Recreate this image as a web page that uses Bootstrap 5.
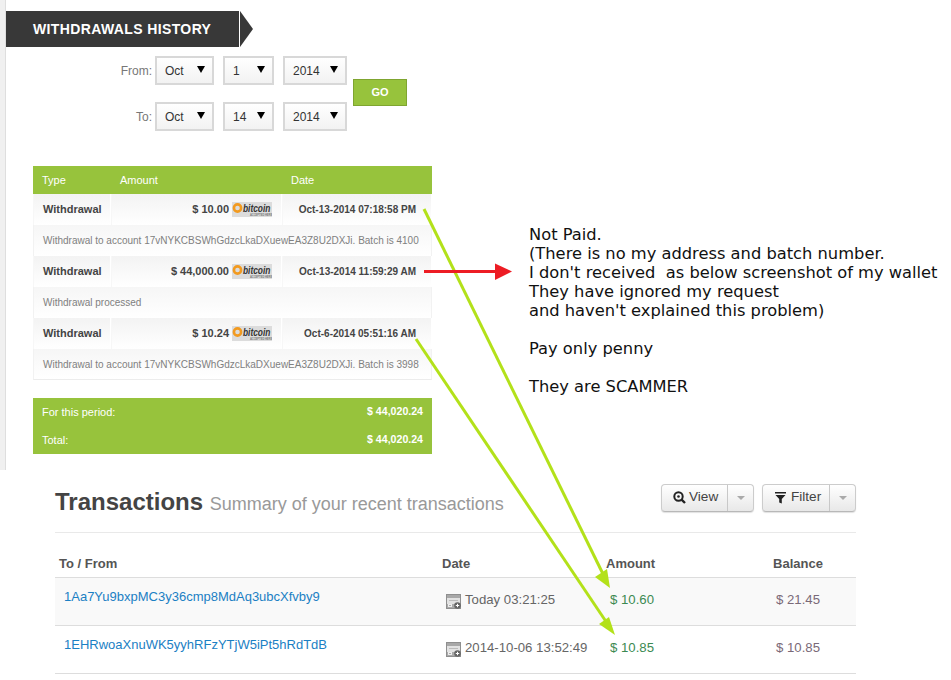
<!DOCTYPE html>
<html lang="en">
<head>
<meta charset="utf-8">
<title>Withdrawals history</title>
<link rel="stylesheet" href="https://cdn.jsdelivr.net/npm/bootstrap@5.3.0/dist/css/bootstrap.min.css">
<style>
html,body{margin:0;background:#fff}
body{width:951px;height:680px;overflow:hidden;position:relative;font-family:"Liberation Sans",Arial,sans-serif;color:#444}
.upper{height:470px;border-left:5px solid #f0f0f0;box-shadow:inset 1px 0 0 #dedede}
.left-col{width:428px;flex:none;padding-top:11px}
.ribbon{width:248px;height:36px;margin-left:1px;gap:1px}
.ribbon-band{width:233px;height:36px;background:#383838;color:#fff;font-size:14px;font-weight:700;letter-spacing:.38px;line-height:36px;padding-left:27px;white-space:nowrap}
.ribbon-tip{width:0;height:0;border-left:13px solid #383838;border-top:18px solid transparent;border-bottom:18px solid transparent}
.filter-wrap{padding-top:9px;height:119px}
.filter-rows{width:348px;gap:17px}
.filter-row{height:29px}
.filter-label{width:150px;flex:none;text-align:right;padding-right:3px;font-size:12px;color:#777}
.pick{appearance:none;height:29px;border:2px solid #d8d8d8;border-radius:0;font-size:12px;color:#333;padding:0 0 0 8px;margin-right:9px;
 background:url("data:image/svg+xml,%3Csvg xmlns='http://www.w3.org/2000/svg' width='8' height='7'%3E%3Cpath d='M0 0h8L4 7z'/%3E%3C/svg%3E") no-repeat right 7px top 8px,linear-gradient(#fff,#f2f2f2)}
.pick-m{width:59px}.pick-d{width:51px}.pick-y{width:64px;margin-right:6px}
.go-btn{width:54px;height:27px;margin-top:23px;background:#97c33c;border:1px solid #7fa530;border-radius:0;color:#fff;font-size:11px;font-weight:700;padding:0;line-height:25px}
.go-btn:hover{background:#97c33c;border-color:#7fa530;color:#fff}
.hist-wrap{margin-left:28px;width:399px}
.hist{width:399px;margin:0;border-collapse:separate;border-spacing:0;table-layout:fixed;font-size:11px;color:#444}
.hist th{background:#97c33c;color:#fff;font-weight:400;height:28px;padding:0 0 0 9px;border:0;font-size:11px;vertical-align:middle;box-shadow:none}
.hist td{padding:0;border:0;vertical-align:middle;box-shadow:none;background:linear-gradient(#f3f3f3,#fff)}
.hist .main-row td{height:31px;font-weight:700;border-left:1px solid #f7f7f7;border-right:1px solid #fff}
.hist .note-row td{height:31px;color:#808080;padding-left:9px;border-left:1px solid #f2f2f2;border-right:1px solid #f2f2f2;font-size:10px;white-space:nowrap;overflow:hidden;background:linear-gradient(#f6f6f6,#fff)}
.hist .note-row:last-child td{border-bottom:1px solid #ececec;height:31px}
.hist .c-type{padding-left:9px;font-size:11px}
.hist .c-amt{font-size:11px}
.hist .c-date{font-size:10px;text-align:right;padding-right:15px;white-space:nowrap}
.amt-line{padding-right:9px;gap:3px}
.coin-tag{width:40px;height:15px;display:block;flex:none}
.sum{width:399px;margin-top:18px;background:#97c33c;color:#fff;font-size:11px;height:56px}
.sum-row{height:28px;padding:0 9px}
.sum-row b{font-size:10.6px}
.note{width:430px;margin-left:96px;padding-top:225px;font-family:"DejaVu Sans",sans-serif;font-size:16.3px;line-height:19px;color:#111;white-space:pre}
.lower{width:801px;margin-left:55px;padding-top:14px}
.head-line{border-bottom:1px solid #e9e9e9;height:49px}
.tx-title{font-size:24px;font-weight:700;color:#444;margin:0;line-height:36px}
.tx-title span{font-size:18px;font-weight:400;color:#999}
.tool-group{height:28px;border:1px solid #ccc;border-bottom-color:#b8b8b8;border-radius:4px;background:linear-gradient(#fff,#e8e8e8);box-shadow:0 1px 1px rgba(0,0,0,.12);font-size:13.6px;color:#444;margin-bottom:20px}
.tool-main{height:26px;gap:3px;padding:0 0 1px 11px;border-right:1px solid #c8c8c8}
.tool-caret{width:25px;height:26px;flex:none}
.tool-caret i{display:block;width:0;height:0;border-top:4px solid #aaa;border-left:4px solid transparent;border-right:4px solid transparent}
.tool-one{width:93px}.tool-two{width:94px;margin-left:8px}
.tool-two .tool-main{gap:5px;padding-left:12px}
.tx{width:801px;margin:0;table-layout:fixed;border-collapse:collapse;font-size:13.2px;color:#666}
.tx th{height:44px;padding:0 0 3px;font-weight:700;color:#555;border:0;border-bottom:1px solid #ddd;vertical-align:bottom;font-size:13px;box-shadow:none;background:none}
.tx td{height:48px;padding:0 0 2px;border:0;border-bottom:1px solid #ddd;background:none;box-shadow:none;vertical-align:middle;color:#666}
.tx tbody tr:first-child td{background:#f9f9f9}
.tx .c-a-h{padding-left:4px}
.tx td.c-a{padding:9px 0 0 9px;vertical-align:top;font-size:13px}
.tx .c-a a{color:#1b80c4;text-decoration:none}
.tx .c-b svg{margin:0 4px;vertical-align:-5px}
.tx .c-c-h{padding-left:8px}
.tx td.c-c{color:#3c8a52;padding-left:12px}
.tx .c-d-h,.tx .c-d{text-align:center}
.tx td.c-d{color:#7a6a78}
.overlay{position:absolute;left:0;top:0;pointer-events:none}
</style>
</head>
<body>
<section class="upper d-flex">
  <div class="left-col">
    <div class="ribbon d-flex">
      <div class="ribbon-band">WITHDRAWALS HISTORY</div>
      <div class="ribbon-tip"></div>
    </div>
    <form class="filter-wrap d-flex">
      <div class="filter-rows d-flex flex-column">
        <div class="filter-row d-flex align-items-center">
          <label class="filter-label">From:</label>
          <select class="pick pick-m"><option>Oct</option></select>
          <select class="pick pick-d"><option>1</option></select>
          <select class="pick pick-y"><option>2014</option></select>
        </div>
        <div class="filter-row d-flex align-items-center">
          <label class="filter-label">To:</label>
          <select class="pick pick-m"><option>Oct</option></select>
          <select class="pick pick-d"><option>14</option></select>
          <select class="pick pick-y"><option>2014</option></select>
        </div>
      </div>
      <button type="button" class="btn go-btn">GO</button>
    </form>
    <div class="hist-wrap">
      <table class="table hist">
        <colgroup><col style="width:78px"><col style="width:171px"><col style="width:150px"></colgroup>
        <thead><tr><th>Type</th><th>Amount</th><th>Date</th></tr></thead>
        <tbody>
          <tr class="main-row"><td class="c-type">Withdrawal</td><td class="c-amt"><div class="d-flex justify-content-end align-items-center amt-line">$ 10.00 <svg class="coin-tag" viewBox="0 0 40 15"><rect width="40" height="15" fill="#dcdcdc"/><circle cx="5.5" cy="6" r="3.6" fill="none" stroke="#f29a1f" stroke-width="2.6"/><text transform="translate(11 10) scale(.76 1)" font-family="Liberation Sans" font-size="11" font-weight="700" font-style="italic" fill="#333">bitcoin</text><text x="18" y="14" font-family="Liberation Sans" font-size="2.6" fill="#777">ACCEPTED HERE</text></svg></div></td><td class="c-date">Oct-13-2014 07:18:58 PM</td></tr>
          <tr class="note-row"><td colspan="3">Withdrawal to account 17vNYKCBSWhGdzcLkaDXuewEA3Z8U2DXJi. Batch is 4100</td></tr>
          <tr class="main-row"><td class="c-type">Withdrawal</td><td class="c-amt"><div class="d-flex justify-content-end align-items-center amt-line">$ 44,000.00 <svg class="coin-tag" viewBox="0 0 40 15"><rect width="40" height="15" fill="#dcdcdc"/><circle cx="5.5" cy="6" r="3.6" fill="none" stroke="#f29a1f" stroke-width="2.6"/><text transform="translate(11 10) scale(.76 1)" font-family="Liberation Sans" font-size="11" font-weight="700" font-style="italic" fill="#333">bitcoin</text><text x="18" y="14" font-family="Liberation Sans" font-size="2.6" fill="#777">ACCEPTED HERE</text></svg></div></td><td class="c-date">Oct-13-2014 11:59:29 AM</td></tr>
          <tr class="note-row"><td colspan="3">Withdrawal processed</td></tr>
          <tr class="main-row"><td class="c-type">Withdrawal</td><td class="c-amt"><div class="d-flex justify-content-end align-items-center amt-line">$ 10.24 <svg class="coin-tag" viewBox="0 0 40 15"><rect width="40" height="15" fill="#dcdcdc"/><circle cx="5.5" cy="6" r="3.6" fill="none" stroke="#f29a1f" stroke-width="2.6"/><text transform="translate(11 10) scale(.76 1)" font-family="Liberation Sans" font-size="11" font-weight="700" font-style="italic" fill="#333">bitcoin</text><text x="18" y="14" font-family="Liberation Sans" font-size="2.6" fill="#777">ACCEPTED HERE</text></svg></div></td><td class="c-date">Oct-6-2014 05:51:16 AM</td></tr>
          <tr class="note-row"><td colspan="3">Withdrawal to account 17vNYKCBSWhGdzcLkaDXuewEA3Z8U2DXJi. Batch is 3998</td></tr>
        </tbody>
      </table>
      <div class="sum">
        <div class="sum-row d-flex justify-content-between align-items-center"><span>For this period:</span><b>$ 44,020.24</b></div>
        <div class="sum-row d-flex justify-content-between align-items-center"><span>Total:</span><b>$ 44,020.24</b></div>
      </div>
    </div>
  </div>
  <div class="note">Not Paid.
(There is no my address and batch number.
I don't received  as below screenshot of my wallet
They have ignored my request
and haven't explained this problem)

Pay only penny

They are SCAMMER</div>
</section>
<section class="lower">
  <div class="head-line d-flex justify-content-between align-items-start">
    <h2 class="tx-title">Transactions <span>Summary of your recent transactions</span></h2>
    <div class="d-flex">
      <div class="tool-group tool-one d-flex align-items-center">
        <div class="tool-main d-flex align-items-center flex-grow-1"><svg width="13" height="13" viewBox="0 0 13 13"><circle cx="5.5" cy="5.5" r="4.2" fill="none" stroke="#222" stroke-width="2"/><circle cx="5.5" cy="5.5" r="1.3" fill="#222"/><path d="M8.6 8.6l3.4 3.4" stroke="#222" stroke-width="2.4"/></svg>View</div>
        <div class="tool-caret d-flex align-items-center justify-content-center"><i></i></div>
      </div>
      <div class="tool-group tool-two d-flex align-items-center">
        <div class="tool-main d-flex align-items-center flex-grow-1"><svg width="11" height="12" viewBox="0 0 11 12"><path d="M0 0h11v1.5H0zM.5 3h10L6.8 7v4.5l-2.6-1V7z" fill="#222"/></svg>Filter</div>
        <div class="tool-caret d-flex align-items-center justify-content-center"><i></i></div>
      </div>
    </div>
  </div>
  <table class="table tx">
    <colgroup><col style="width:387px"><col style="width:156px"><col style="width:142px"><col style="width:116px"></colgroup>
    <thead><tr><th class="c-a-h">To / From</th><th>Date</th><th class="c-c-h">Amount</th><th class="c-d-h">Balance</th></tr></thead>
    <tbody>
      <tr><td class="c-a"><a href="#">1Aa7Yu9bxpMC3y36cmp8MdAq3ubcXfvby9</a></td><td class="c-b"><svg width="15" height="15" viewBox="0 0 15 15"><rect x=".5" y=".5" width="14" height="14" fill="#e2e2e2" stroke="#8f8f8f"/><path d="M1 1h13v3H1z" fill="#a8a8a8"/><path d="M1 10h13v4H1z" fill="#aaa"/><path d="M3 6.5h9" stroke="#bbb"/><circle cx="11.5" cy="11.5" r="3.3" fill="#666"/><path d="M9.8 11.5h3.4M11.5 9.8v3.4" stroke="#fff"/><rect x="2.5" y="10.5" width="3" height="2" fill="none" stroke="#eee"/></svg>Today 03:21:25</td><td class="c-c">$ 10.60</td><td class="c-d">$ 21.45</td></tr>
      <tr><td class="c-a"><a href="#">1EHRwoaXnuWK5yyhRFzYTjW5iPt5hRdTdB</a></td><td class="c-b"><svg width="15" height="15" viewBox="0 0 15 15"><rect x=".5" y=".5" width="14" height="14" fill="#e2e2e2" stroke="#8f8f8f"/><path d="M1 1h13v3H1z" fill="#a8a8a8"/><path d="M1 10h13v4H1z" fill="#aaa"/><path d="M3 6.5h9" stroke="#bbb"/><circle cx="11.5" cy="11.5" r="3.3" fill="#666"/><path d="M9.8 11.5h3.4M11.5 9.8v3.4" stroke="#fff"/><rect x="2.5" y="10.5" width="3" height="2" fill="none" stroke="#eee"/></svg>2014-10-06 13:52:49</td><td class="c-c">$ 10.85</td><td class="c-d">$ 10.85</td></tr>
    </tbody>
  </table>
</section>
<svg class="overlay" width="951" height="680" viewBox="0 0 951 680">
  <path d="M424 209L603 574" stroke="#b3e11a" stroke-width="3" fill="none"/>
  <path d="M610 588L595 577L607 569z" fill="#b3e11a"/>
  <path d="M416 339L607 623" stroke="#b3e11a" stroke-width="3" fill="none"/>
  <path d="M615 635L599 624L609 617z" fill="#b3e11a"/>
  <path d="M424 271.5H496" stroke="#ed1c24" stroke-width="3" fill="none"/>
  <path d="M512 271.5L495 263.5V280z" fill="#ed1c24"/>
</svg>
</body>
</html>
